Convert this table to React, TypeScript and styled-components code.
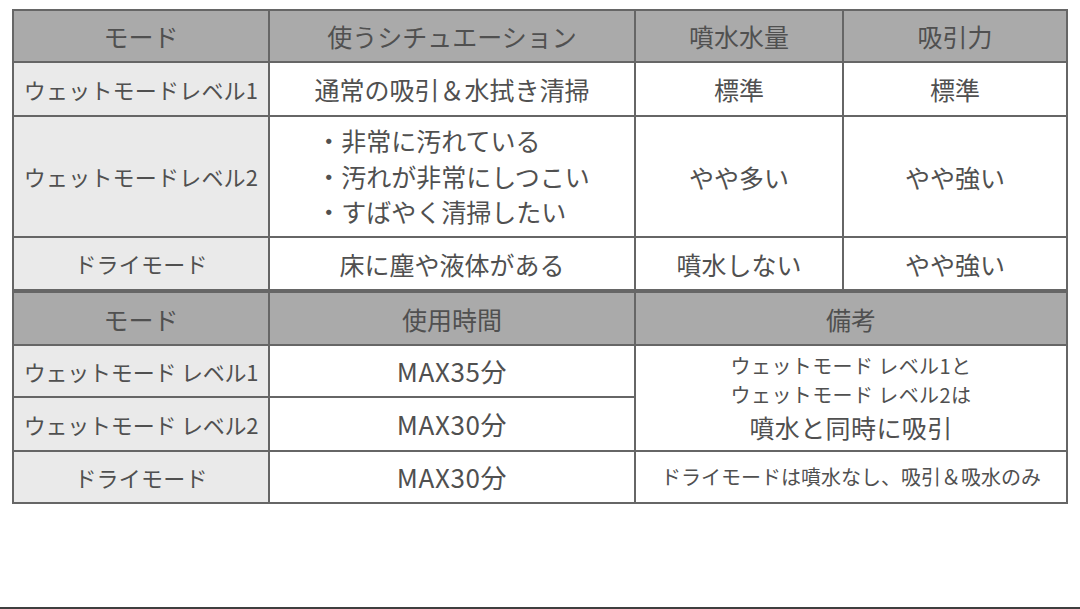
import React from "react";
import styled, { createGlobalStyle } from "styled-components";

const Global = createGlobalStyle`
  html, body { margin: 0; padding: 0; background: #ffffff; }
  body { font-family: "Noto Sans CJK JP", "Noto Sans", sans-serif; }
`;

const Page = styled.div`
  box-sizing: border-box;
  width: 1080px;
  height: 609px;
  padding: 9px 0 0 12px;
  border-bottom: 2px solid #3f3f3f;
  display: flex;
  flex-direction: column;
`;

const Table = styled.table`
  border-collapse: collapse;
  table-layout: fixed;
  width: 1054px;
  color: #505050;
  font-size: 25px;
  line-height: 1.2;
  text-align: center;
`;

const HeadCell = styled.th`
  background: #aaaaaa;
  border: 2px solid #666666;
  font-weight: 400;
  padding: 0;
`;

const ModeCell = styled.td<{ $small?: boolean }>`
  background: #eaeaea;
  border: 2px solid #666666;
  font-size: 22px;
  padding: 0;
  white-space: nowrap;
  letter-spacing: ${(p) => (p.$small ? "-0.2px" : "0.2px")};
`;

const Cell = styled.td<{ $size?: number }>`
  background: #ffffff;
  border: 2px solid #666666;
  padding: 0;
  font-size: ${(p) => p.$size ?? 25}px;
  white-space: nowrap;
`;

const Row = styled.tr<{ $h: number }>`
  height: ${(p) => p.$h}px;
`;

const BulletList = styled.div`
  display: inline-block;
  text-align: left;
  line-height: 35.5px;
  padding-left: 2px;
`;

const NoteLine = styled.div<{ $size: number; $lh: number }>`
  font-size: ${(p) => p.$size}px;
  line-height: ${(p) => p.$lh}px;
  letter-spacing: 0.4px;
`;

const MaxText = styled.span`
  font-size: 26px;
  letter-spacing: 0.6px;
`;

export default function App() {
  return (
    <>
      <Global />
      <Page>
        <Table>
          <colgroup>
            <col style={{ width: 256 }} />
            <col style={{ width: 366 }} />
            <col style={{ width: 208 }} />
            <col style={{ width: 224 }} />
          </colgroup>
          <thead>
            <Row $h={52}>
              <HeadCell>モード</HeadCell>
              <HeadCell>使うシチュエーション</HeadCell>
              <HeadCell>噴水水量</HeadCell>
              <HeadCell>吸引力</HeadCell>
            </Row>
          </thead>
          <tbody>
            <Row $h={54}>
              <ModeCell>ウェットモードレベル1</ModeCell>
              <Cell>通常の吸引＆水拭き清掃</Cell>
              <Cell>標準</Cell>
              <Cell>標準</Cell>
            </Row>
            <Row $h={121}>
              <ModeCell>ウェットモードレベル2</ModeCell>
              <Cell>
                <BulletList>
                  ・非常に汚れている
                  <br />
                  ・汚れが非常にしつこい
                  <br />
                  ・すばやく清掃したい
                </BulletList>
              </Cell>
              <Cell>やや多い</Cell>
              <Cell>やや強い</Cell>
            </Row>
            <Row $h={53}>
              <ModeCell>ドライモード</ModeCell>
              <Cell>床に塵や液体がある</Cell>
              <Cell>噴水しない</Cell>
              <Cell>やや強い</Cell>
            </Row>
          </tbody>
        </Table>
        <Table>
          <colgroup>
            <col style={{ width: 256 }} />
            <col style={{ width: 366 }} />
            <col style={{ width: 432 }} />
          </colgroup>
          <thead>
            <Row $h={53}>
              <HeadCell>モード</HeadCell>
              <HeadCell>使用時間</HeadCell>
              <HeadCell>備考</HeadCell>
            </Row>
          </thead>
          <tbody>
            <Row $h={52}>
              <ModeCell $small>ウェットモード レベル1</ModeCell>
              <Cell>
                <MaxText>MAX35分</MaxText>
              </Cell>
              <Cell rowSpan={2}>
                <NoteLine $size={20} $lh={29}>ウェットモード レベル1と</NoteLine>
                <NoteLine $size={20} $lh={29}>ウェットモード レベル2は</NoteLine>
                <NoteLine $size={25} $lh={37}>噴水と同時に吸引</NoteLine>
              </Cell>
            </Row>
            <Row $h={54}>
              <ModeCell $small>ウェットモード レベル2</ModeCell>
              <Cell>
                <MaxText>MAX30分</MaxText>
              </Cell>
            </Row>
            <Row $h={52}>
              <ModeCell>ドライモード</ModeCell>
              <Cell>
                <MaxText>MAX30分</MaxText>
              </Cell>
              <Cell $size={20}>ドライモードは噴水なし、吸引＆吸水のみ</Cell>
            </Row>
          </tbody>
        </Table>
      </Page>
    </>
  );
}
